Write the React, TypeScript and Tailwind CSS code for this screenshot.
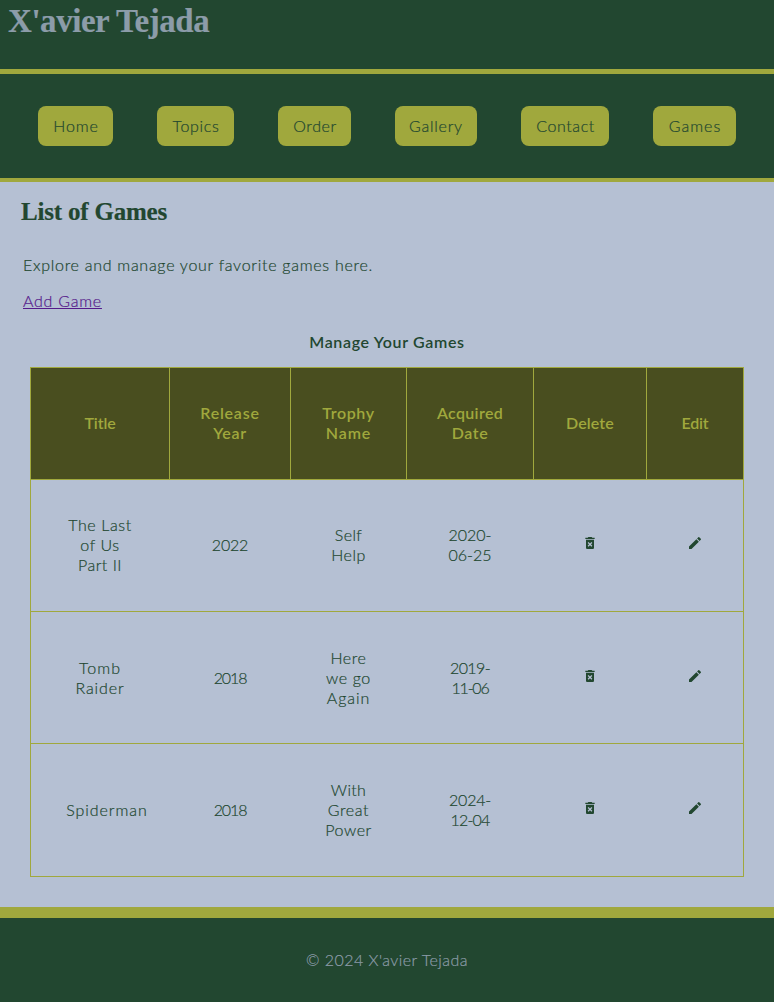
import { MdDeleteForever, MdEdit } from "react-icons/md";

const links = [
  { label: "Home", box: "w-[75px] pl-px tracking-[0.9px]" },
  { label: "Topics", box: "w-[77px] pl-px tracking-[0.65px]" },
  { label: "Order", box: "w-[73px] pl-px tracking-[0.6px]" },
  { label: "Gallery", box: "w-[82px] tracking-[0.75px]" },
  { label: "Contact", box: "w-[88px] pl-px tracking-[0.6px]" },
  { label: "Games", box: "w-[83px] pl-px tracking-[1px]" },
];

type Line = [text: string, tracking: string];

const columns: { width: string; lines: Line[] }[] = [
  { width: "w-[140px]", lines: [["Title", "tracking-[-0.1px]"]] },
  { width: "w-[121px]", lines: [["Release", "tracking-[0.75px]"], ["Year", "tracking-[0.7px]"]] },
  { width: "w-[116px]", lines: [["Trophy", "tracking-[0.6px]"], ["Name", "tracking-[0.9px]"]] },
  { width: "w-[127px]", lines: [["Acquired", "tracking-[0.35px]"], ["Date", "tracking-[0.6px]"]] },
  { width: "w-[113px]", lines: [["Delete", "tracking-[0.1px]"]] },
  { width: "w-[97px]", lines: [["Edit", "tracking-[-0.2px]"]] },
];

const games: { height: string; text: string; icon: string; cells: Line[][] }[] = [
  {
    height: "h-[132px]",
    text: "pb-[2px]",
    icon: "pb-[5px]",
    cells: [
      [["The Last", "tracking-[0.6px]"], ["of Us", "tracking-[0.6px]"], ["Part II", "tracking-[0.5px]"]],
      [["2022", "tracking-[-0.2px]"]],
      [["Self", "tracking-[0.4px]"], ["Help", "tracking-[0.5px]"]],
      [["2020-", "tracking-[0px]"], ["06-25", "tracking-[0px]"]],
    ],
  },
  {
    height: "h-[132px]",
    text: "pb-0",
    icon: "pb-[3px]",
    cells: [
      [["Tomb", "tracking-[1px]"], ["Raider", "tracking-[0.9px]"]],
      [["2018", "tracking-[-1.1px]"]],
      [["Here", "tracking-[0.6px]"], ["we go", "tracking-[0.6px]"], ["Again", "tracking-[0.9px]"]],
      [["2019-", "tracking-[-0.6px]"], ["11-06", "tracking-[-1.2px]"]],
    ],
  },
  {
    height: "h-[133px]",
    text: "pb-px",
    icon: "pb-[4px]",
    cells: [
      [["Spiderman", "pl-[14px] tracking-[0.95px]"]],
      [["2018", "tracking-[-1.1px]"]],
      [["With", "tracking-[0.3px]"], ["Great", "tracking-[0.6px]"], ["Power", "tracking-[0.6px]"]],
      [["2024-", "tracking-[-0.2px]"], ["12-04", "tracking-[-0.8px]"]],
    ],
  },
];

function Lines({ lines }: { lines: Line[] }) {
  return lines.map(([text, tracking]) => (
    <span key={text} className={`block whitespace-nowrap ${tracking}`}>
      {text}
    </span>
  ));
}

export default function App() {
  return (
    <div className="flex min-h-[1002px] w-full flex-col bg-[#b5c0d3] font-[Lato,sans-serif] text-base leading-5 font-light text-[#224730] [-webkit-text-stroke:0.2px]">
      <header className="h-[74px] border-b-5 border-[#a0a83d] bg-[#224730] pl-2">
        <h1 className="font-['Liberation_Serif',serif] text-[33px] leading-[43px] font-bold tracking-[-0.45px] text-[#8c9ca9]">
          X'avier Tejada
        </h1>
      </header>

      <nav className="flex h-[108px] items-center justify-center gap-11 border-b-4 border-[#a0a83d] bg-[#224730]">
        {links.map(({ label, box }) => (
          <a
            key={label}
            href="#"
            className={`flex h-10 items-center justify-center rounded-lg bg-[#a0a83d] ${box}`}
          >
            {label}
          </a>
        ))}
      </nav>

      <main className="h-[725px] px-[23px] pt-4">
        <h2 className="-ml-0.5 font-['Liberation_Serif',serif] text-[25px] leading-7 font-bold tracking-[-0.2px]">
          List of Games
        </h2>
        <p className="mt-[29px] tracking-[0.72px]">Explore and manage your favorite games here.</p>
        <p className="mt-4">
          <a href="#" className="tracking-[0.75px] text-[#551a8b] underline">
            Add Game
          </a>
        </p>

        <table className="mx-[7px] mt-[21px] w-[714px] table-fixed border-separate border-spacing-0 text-center">
          <caption className="h-[35px] font-semibold tracking-[0.65px] [-webkit-text-stroke:0]">
            Manage Your Games
          </caption>
          <thead className="bg-[#494e1f] text-[#a0a83d] [-webkit-text-stroke:0]">
            <tr className="h-[113px]">
              {columns.map(({ width, lines }) => (
                <th
                  key={lines[0][0]}
                  className={`border-t border-r border-b border-[#a0a83d] p-0 pb-[2px] font-semibold first:border-l ${width}`}
                >
                  <Lines lines={lines} />
                </th>
              ))}
            </tr>
          </thead>
          <tbody>
            {games.map(({ height, text, icon, cells }, row) => (
              <tr key={row} className={height}>
                {cells.map((lines, column) => (
                  <td key={column} className={`border-b border-[#a0a83d] pt-0 pr-px pl-0 first:border-l ${text}`}>
                    <Lines lines={lines} />
                  </td>
                ))}
                <td className={`border-b border-[#a0a83d] pt-0 pr-px pl-0 ${icon}`}>
                  <MdDeleteForever className="mx-auto size-4" />
                </td>
                <td className={`border-r border-b border-[#a0a83d] px-0 pt-0 ${icon}`}>
                  <MdEdit className="mx-auto size-4" />
                </td>
              </tr>
            ))}
          </tbody>
        </table>
      </main>

      <footer className="flex h-[95px] items-center justify-center border-t-11 border-[#a0a83d] bg-[#224730] tracking-[0.45px] text-[#8c9ca9]">
        © 2024 X'avier Tejada
      </footer>
    </div>
  );
}
